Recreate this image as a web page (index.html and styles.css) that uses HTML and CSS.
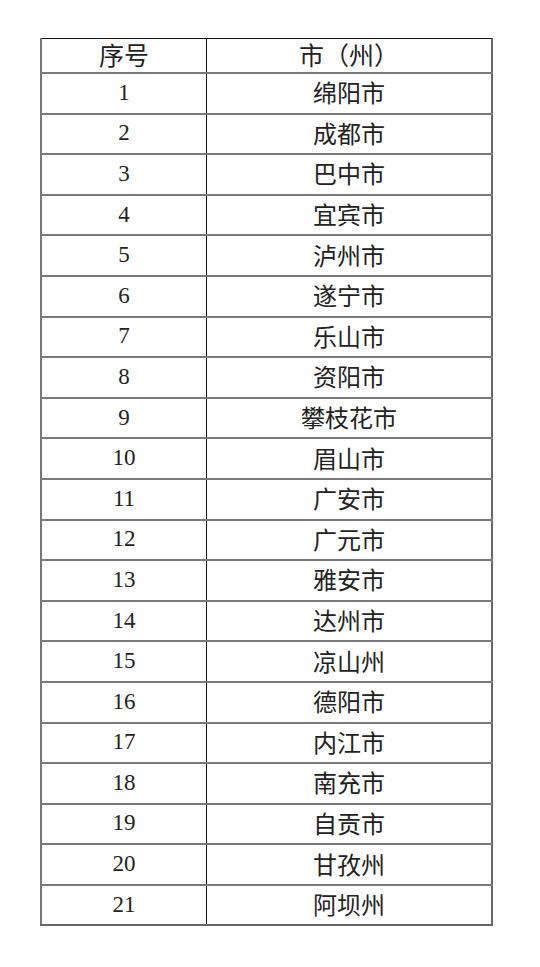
FILE: index.html
```html
<!DOCTYPE html>
<html lang="zh-CN">
<head>
<meta charset="utf-8">
<link rel="stylesheet" href="styles.css">
</head>
<body>
<table class="tbl">
<thead>
<tr class="head"><th class="c1">序号</th><th class="c2">市（州）</th></tr>
</thead>
<tbody>
<tr><td class="num">1</td><td class="name">绵阳市</td></tr>
<tr><td class="num">2</td><td class="name">成都市</td></tr>
<tr><td class="num">3</td><td class="name">巴中市</td></tr>
<tr><td class="num">4</td><td class="name">宜宾市</td></tr>
<tr><td class="num">5</td><td class="name">泸州市</td></tr>
<tr><td class="num">6</td><td class="name">遂宁市</td></tr>
<tr><td class="num">7</td><td class="name">乐山市</td></tr>
<tr><td class="num">8</td><td class="name">资阳市</td></tr>
<tr><td class="num">9</td><td class="name">攀枝花市</td></tr>
<tr><td class="num">10</td><td class="name">眉山市</td></tr>
<tr><td class="num">11</td><td class="name">广安市</td></tr>
<tr><td class="num">12</td><td class="name">广元市</td></tr>
<tr><td class="num">13</td><td class="name">雅安市</td></tr>
<tr><td class="num">14</td><td class="name">达州市</td></tr>
<tr><td class="num">15</td><td class="name">凉山州</td></tr>
<tr><td class="num">16</td><td class="name">德阳市</td></tr>
<tr><td class="num">17</td><td class="name">内江市</td></tr>
<tr><td class="num">18</td><td class="name">南充市</td></tr>
<tr><td class="num">19</td><td class="name">自贡市</td></tr>
<tr><td class="num">20</td><td class="name">甘孜州</td></tr>
<tr><td class="num">21</td><td class="name">阿坝州</td></tr>
</tbody>
</table>
</body>
</html>
```
FILE: styles.css
```css
html, body {
  margin: 0;
  padding: 0;
  background: #ffffff;
}
body {
  padding: 38px 0 0 40px;
}
.tbl {
  border-collapse: collapse;
  width: 453px;
  table-layout: fixed;
  color: #222222;
  border-top: 1px solid #111111;
  border-left: 2px solid #777777;
  border-right: 2px solid #666666;
  border-bottom: 2px solid #666666;
}
.tbl th, .tbl td {
  padding: 0 0 2px 0;
  text-align: center;
  vertical-align: middle;
  border-top: 2px solid #7a7a7a;
}
.tbl .c1, .tbl .num {
  width: 164px;
  border-right: 1px solid #111111;
}
.head th {
  height: 31px;
  font-family: "Noto Sans CJK SC", "Noto Sans", sans-serif;
  font-weight: 400;
  font-size: 25px;
  line-height: 1;
  border-top: none;
}
.tbl td {
  height: 36.6px;
}
.num {
  font-family: "Liberation Serif", "Times New Roman", serif;
  font-size: 23px;
  line-height: 1;
}
.name {
  font-family: "Noto Sans CJK SC", "Noto Sans", sans-serif;
  font-size: 24px;
  line-height: 1;
}
```
